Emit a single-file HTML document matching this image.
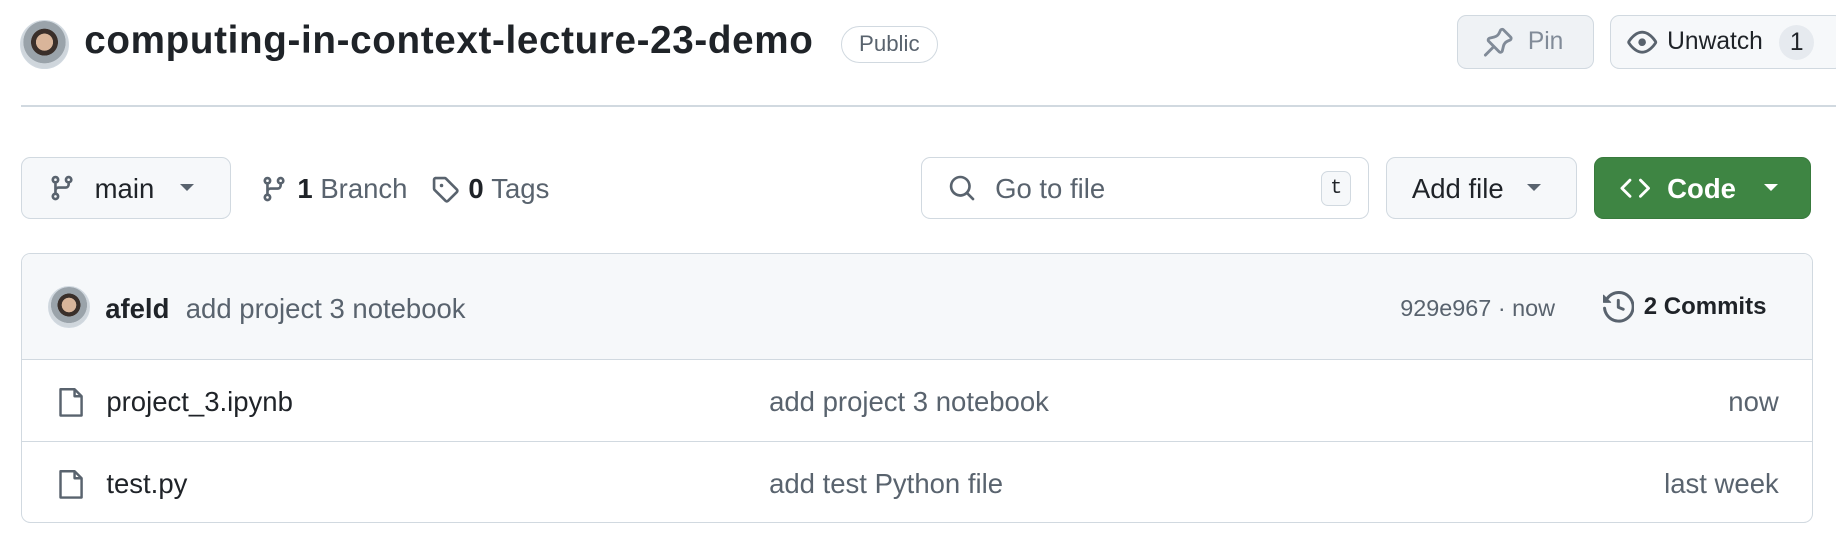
<!DOCTYPE html>
<html><head><meta charset="utf-8"><style>
html,body{margin:0;padding:0;background:#fff;}
body{width:1568px;height:465px;zoom:1.1709;position:relative;overflow:hidden;font-family:"Liberation Sans",sans-serif;color:#1f2328;}
.abs{position:absolute;}
.btn{position:absolute;box-sizing:border-box;border:1.5px solid #d1d9e0;border-radius:8px;background:#f6f8fa;display:flex;align-items:center;}
.av{border-radius:50%;background:radial-gradient(circle at 50% 45%,#d9b59a 0 24%,#3a2f2a 25% 38%,#9aa3aa 39% 60%,#cfd6dc 61%);border:1.5px solid #d1d9e0;box-sizing:border-box;}
svg{display:block}
</style></head><body>
<div class="abs av" style="left:17px;top:17px;width:42px;height:42px"></div>
<div class="abs" style="left:72px;top:16px;font-size:33px;font-weight:bold;letter-spacing:0.55px">computing-in-context-lecture-23-demo</div>
<div class="abs" style="left:718px;top:22px;width:83px;height:32px;box-sizing:border-box;border:1.5px solid #d1d9e0;border-radius:16px;font-size:19px;color:#59636e;text-align:center;line-height:29px">Public</div>
<div class="btn" style="left:1244px;top:13px;width:117px;height:46px;background:#eff2f5;color:#818b98;font-size:21px;padding-left:22px">
<svg width="26" height="26" viewBox="0 0 16 16" fill="#818b98"><path d="m11.294.984 3.722 3.722a1.75 1.750 0 0 1-.504 2.826l-1.327.613a3.089 3.089 0 0 0-1.707 2.084l-.584 2.454c-.317 1.332-1.972 1.8-2.94.832L5.75 11.311 1.78 15.28a.749.749 0 1 1-1.060-1.060l3.969-3.97-2.204-2.204c-.968-.968-.5-2.623.832-2.94l2.454-.584a3.08 3.08 0 0 0 2.084-1.707l.613-1.327a1.75 1.75 0 0 1 2.826-.504ZM6.283 9.723l2.732 2.731a.25.25 0 0 0 .42-.119l.584-2.454a4.586 4.586 0 0 1 2.537-3.098l1.328-.613a.25.25 0 0 0 .072-.404l-3.722-3.722a.25.25 0 0 0-.404.072l-.613 1.328a4.584 4.584 0 0 1-3.098 2.537l-2.454.584a.25.25 0 0 0-.119.42l2.731 2.732Z"/></svg><span style="margin-left:12px">Pin</span></div>
<div class="btn" style="left:1375px;top:13px;width:200px;height:46px;font-size:21px;padding-left:14px">
<svg width="26" height="26" viewBox="0 0 16 16" fill="#59636e"><path d="M8 2c1.981 0 3.671.992 4.933 2.078 1.27 1.091 2.187 2.345 2.637 3.023a1.62 1.62 0 0 1 0 1.798c-.45.678-1.367 1.932-2.637 3.023C11.67 13.008 9.981 14 8 14c-1.981 0-3.671-.992-4.933-2.078C1.797 10.830.88 9.576.43 8.898a1.62 1.62 0 0 1 0-1.798c.45-.677 1.367-1.931 2.637-3.022C4.33 2.992 6.019 2 8 2ZM1.679 7.932a.12.12 0 0 0 0 .136c.411.622 1.241 1.75 2.366 2.717C5.176 11.758 6.527 12.5 8 12.5c1.473 0 2.825-.742 3.955-1.715 1.124-.967 1.954-2.096 2.366-2.717a.12.12 0 0 0 0-.136c-.412-.621-1.242-1.75-2.366-2.717C10.824 4.242 9.473 3.5 8 3.5c-1.473 0-2.825.742-3.955 1.715-1.124.967-1.954 2.096-2.366 2.717ZM8 10a2 2 0 1 1-.001-3.999A2 2 0 0 1 8 10Z"/></svg><span style="margin-left:8px">Unwatch</span><span style="margin-left:14px;background:#e6eaef;border-radius:15px;width:30px;height:30px;text-align:center;line-height:30px">1</span></div>
<div class="abs" style="left:18px;top:90px;width:1560px;height:1.5px;background:#d1d9e0"></div>

<div class="btn" style="left:18px;top:134px;width:179px;height:53px;font-size:23.5px;padding-left:22px">
<svg width="24" height="24" viewBox="0 0 16 16" fill="#59636e"><path d="M9.5 3.25a2.25 2.25 0 1 1 3 2.122V6A2.5 2.5 0 0 1 10 8.5H6a1 1 0 0 0-1 1v1.128a2.251 2.251 0 1 1-1.5 0V5.372a2.25 2.25 0 1 1 1.5 0v1.836A2.493 2.493 0 0 1 6 7h4a1 1 0 0 0 1-1v-.628A2.25 2.25 0 0 1 9.5 3.25Zm-6 0a.75.75 0 1 0 1.5 0 .75.75 0 0 0-1.5 0Zm8.25-.75a.75.75 0 1 0 0 1.5.75.75 0 0 0 0-1.5ZM4.25 12a.75.75 0 1 0 0 1.5.75.75 0 0 0 0-1.5Z"/></svg>
<span style="margin-left:16px;margin-top:2px">main</span><span style="margin-left:22px;border-left:6px solid transparent;border-right:6px solid transparent;border-top:6px solid #59636e"></span></div>
<div class="abs" style="left:222px;top:148px;display:flex;align-items:center;font-size:23.5px;color:#59636e">
<svg width="24" height="24" viewBox="0 0 16 16" fill="#59636e"><path d="M9.5 3.25a2.25 2.25 0 1 1 3 2.122V6A2.5 2.5 0 0 1 10 8.5H6a1 1 0 0 0-1 1v1.128a2.251 2.251 0 1 1-1.5 0V5.372a2.25 2.25 0 1 1 1.5 0v1.836A2.493 2.493 0 0 1 6 7h4a1 1 0 0 0 1-1v-.628A2.25 2.25 0 0 1 9.5 3.25Zm-6 0a.75.75 0 1 0 1.5 0 .75.75 0 0 0-1.5 0Zm8.25-.75a.75.75 0 1 0 0 1.5.75.75 0 0 0 0-1.5ZM4.25 12a.75.75 0 1 0 0 1.5.75.75 0 0 0 0-1.5Z"/></svg>
<b style="color:#1f2328;margin-left:8px">1</b>&nbsp;Branch
<svg style="margin-left:20px" width="24" height="24" viewBox="0 0 16 16" fill="#59636e"><path d="M1 7.775V2.75C1 1.784 1.784 1 2.75 1h5.025c.464 0 .91.184 1.238.513l6.25 6.25a1.75 1.75 0 0 1 0 2.474l-5.026 5.026a1.75 1.75 0 0 1-2.474 0l-6.25-6.25A1.752 1.752 0 0 1 1 7.775Zm1.5 0c0 .066.026.13.073.177l6.25 6.25a.25.25 0 0 0 .354 0l5.025-5.025a.25.25 0 0 0 0-.354l-6.250-6.25a.25.25 0 0 0-.177-.073H2.75a.25.25 0 0 0-.25.25ZM6 5a1 1 0 1 1 0 2 1 1 0 0 1 0-2Z"/></svg>
<b style="color:#1f2328;margin-left:8px">0</b>&nbsp;Tags</div>

<div class="btn" style="left:787px;top:134px;width:382px;height:53px;background:#fff;font-size:23.5px;color:#59636e;padding-left:22px">
<svg width="24" height="24" viewBox="0 0 16 16" fill="#59636e"><path d="M10.68 11.74a6 6 0 0 1-7.922-8.982 6 6 0 0 1 8.982 7.922l3.04 3.04a.749.749 0 0 1-.326 1.275.749.749 0 0 1-.734-.215ZM11.5 7a4.499 4.499 0 1 0-8.997 0A4.499 4.499 0 0 0 11.5 7Z"/></svg>
<span style="margin-left:16px;margin-top:2px">Go to file</span>
<span style="position:absolute;right:14px;top:11px;width:26px;height:30px;border:1.5px solid #d1d9e0;border-radius:6px;box-sizing:border-box;font-family:'Liberation Mono',monospace;font-size:17px;color:#1f2328;text-align:center;line-height:27px;background:#f6f8fa">t</span></div>
<div class="btn" style="left:1184px;top:134px;width:163px;height:53px;font-size:23.5px;padding-left:21px"><span style="margin-top:2px">Add file</span><span style="margin-left:20px;border-left:6px solid transparent;border-right:6px solid transparent;border-top:6px solid #59636e"></span></div>
<div class="btn" style="left:1361px;top:134px;width:186px;height:53px;background:#3e8543;border-color:#387a3d;color:#fff;font-size:23.5px;font-weight:bold;padding-left:22px">
<svg width="26" height="26" viewBox="0 0 16 16" fill="#fff"><path d="m11.28 3.22 4.25 4.25a.75.75 0 0 1 0 1.06l-4.25 4.25a.749.749 0 0 1-1.275-.326.749.749 0 0 1 .215-.734L13.94 8l-3.72-3.72a.749.749 0 0 1 .326-1.275.749.749 0 0 1 .734.215Zm-6.56 0a.751.751 0 0 1 1.042.018.751.751 0 0 1 .018 1.042L2.06 8l3.72 3.72a.749.749 0 0 1-.326 1.275.749.749 0 0 1-.734-.215L.47 8.53a.75.75 0 0 1 0-1.06Z"/></svg>
<span style="margin-left:14px;margin-top:2px">Code</span><span style="margin-left:24px;border-left:6px solid transparent;border-right:6px solid transparent;border-top:6px solid #fff"></span></div>

<div class="abs" style="left:18px;top:216px;width:1530px;height:231px;box-sizing:border-box;border:1.5px solid #d1d9e0;border-radius:8px;overflow:hidden">
<div style="height:90px;background:#f6f8fa;position:relative;font-size:23.5px">
<div class="abs av" style="left:22px;top:27px;width:36px;height:36px"></div>
<div class="abs" style="left:71px;top:33px"><b>afeld</b><span style="color:#59636e;margin-left:14px">add project 3 notebook</span></div>
<div class="abs" style="left:1177px;top:35px;font-size:20px;color:#59636e">929e967 · now</div>
<div class="abs" style="left:1350px;top:32px;display:flex;align-items:center;font-size:20.5px;font-weight:bold">
<svg width="27" height="27" viewBox="0 0 16 16" fill="#59636e"><path d="m.427 1.927 1.215 1.215a8.002 8.002 0 1 1-1.6 5.685.75.75 0 1 1 1.493-.154 6.5 6.5 0 1 0 1.18-4.458l1.358 1.358A.25.25 0 0 1 3.896 6H.25A.25.25 0 0 1 0 5.75V2.104a.25.25 0 0 1 .427-.177ZM7.75 4a.75.75 0 0 1 .75.75v2.992l2.028.812a.75.75 0 0 1-.557 1.392l-2.5-1A.751.751 0 0 1 7 8.25v-3.5A.75.75 0 0 1 7.75 4Z"/></svg><span style="margin-left:8px">2 Commits</span></div>
</div>
<div style="height:69px;border-top:1.5px solid #d1d9e0;position:relative;font-size:23.5px">
<svg class="abs" style="left:30px;top:22px" width="24" height="28" viewBox="0 0 16 18"><path d="M2 1.5h8l4 4V16.5H2Z M10 1.5v4h4" fill="none" stroke="#59636e" stroke-width="1.4" stroke-linejoin="round"/></svg>
<div class="abs" style="left:72px;top:22px">project_3.ipynb</div>
<div class="abs" style="left:638px;top:22px;color:#59636e">add project 3 notebook</div>
<div class="abs" style="right:28px;top:22px;color:#59636e">now</div></div>
<div style="height:69px;border-top:1.5px solid #d1d9e0;position:relative;font-size:23.5px">
<svg class="abs" style="left:30px;top:22px" width="24" height="28" viewBox="0 0 16 18"><path d="M2 1.5h8l4 4V16.5H2Z M10 1.5v4h4" fill="none" stroke="#59636e" stroke-width="1.4" stroke-linejoin="round"/></svg>
<div class="abs" style="left:72px;top:22px">test.py</div>
<div class="abs" style="left:638px;top:22px;color:#59636e">add test Python file</div>
<div class="abs" style="right:28px;top:22px;color:#59636e">last week</div></div>
</div>
</body></html>
